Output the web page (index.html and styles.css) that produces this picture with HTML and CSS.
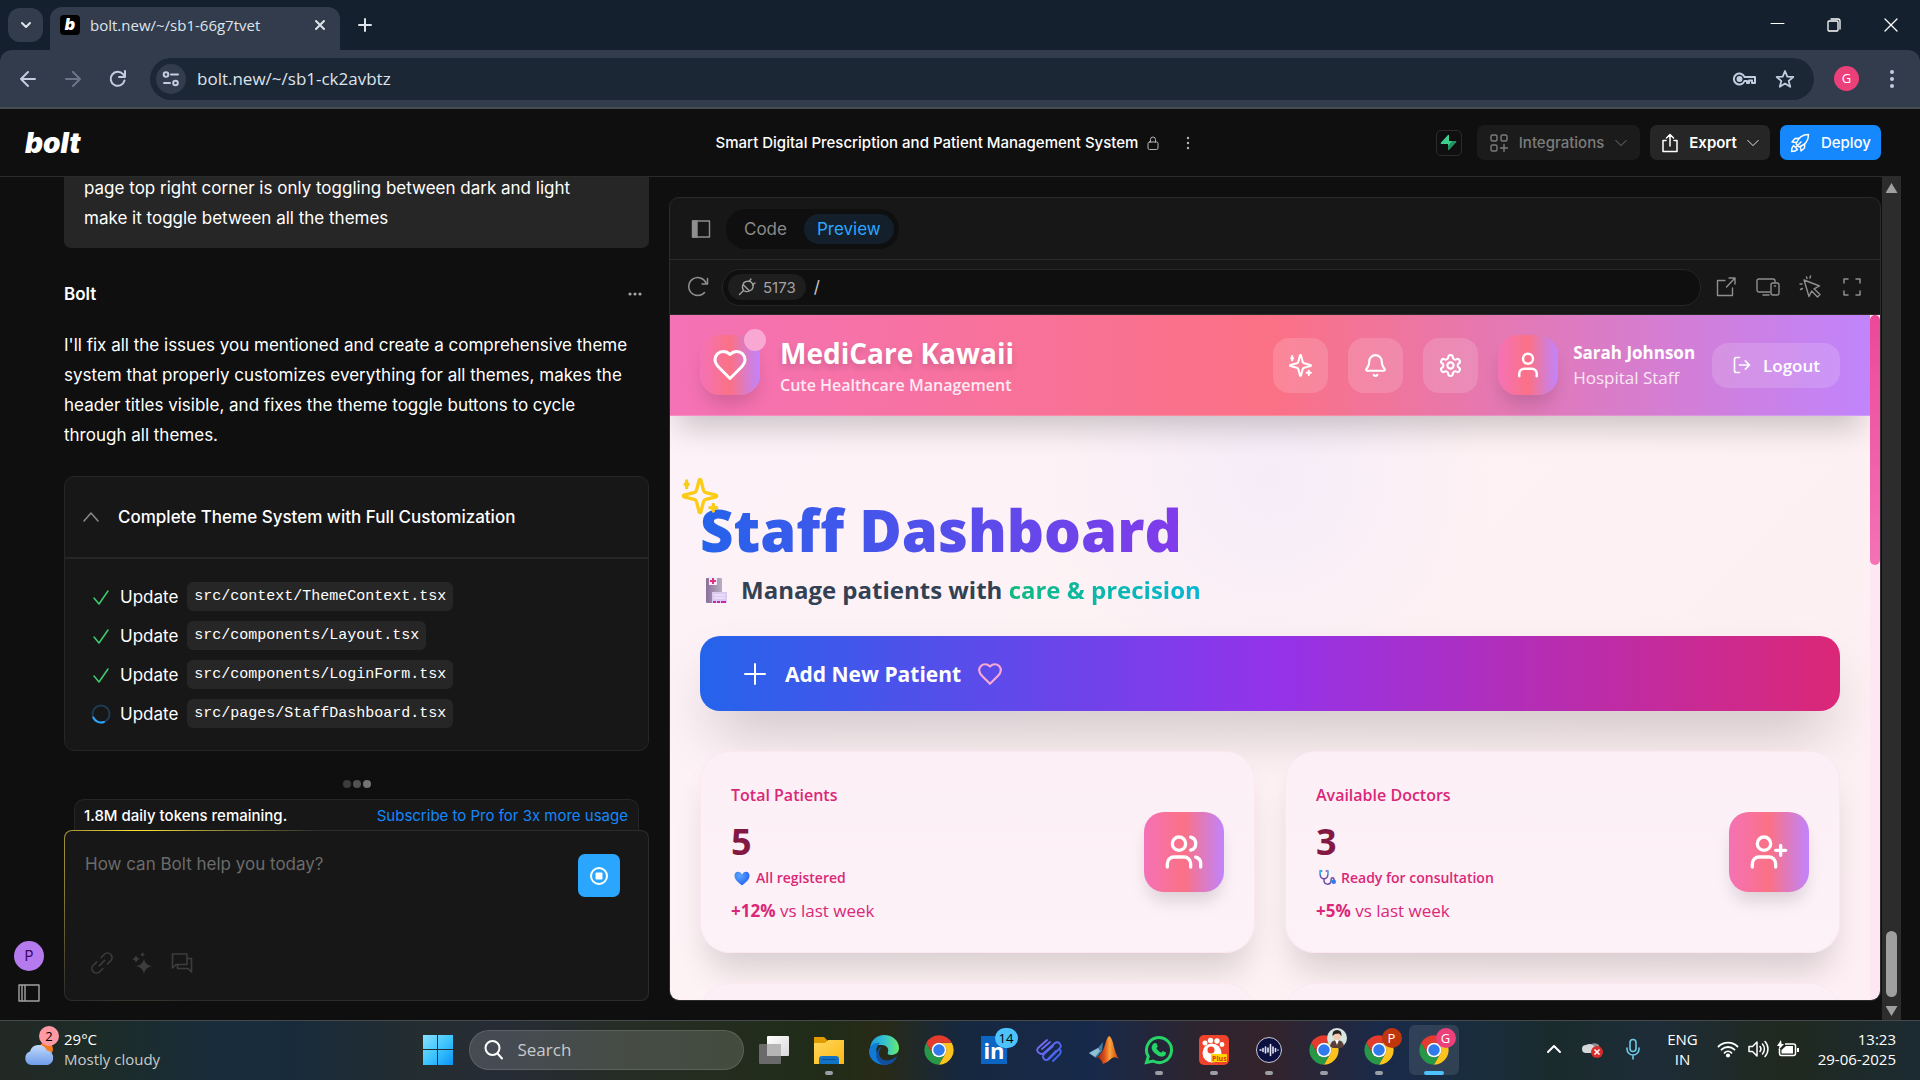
FILE: index.html
```html
<!DOCTYPE html>
<html lang="en">
<head>
  <meta charset="UTF-8" />
  <meta name="viewport" content="width=device-width, initial-scale=1.0"/>
  <title>bolt.new</title>
  <link rel="stylesheet" href="styles.css">
</head>
<body>
  <!-- shared icons -->
  <svg class="defs" width="0" height="0" aria-hidden="true">
    <defs>
      <linearGradient id="gWin" x1="0" y1="0" x2="1" y2="1"><stop offset="0" stop-color="#8ae0ff"/><stop offset=".5" stop-color="#3fc6fd"/><stop offset="1" stop-color="#0a93f5"/></linearGradient>
      <linearGradient id="gFolder" x1="0" y1="0" x2="1" y2="1"><stop offset="0" stop-color="#ffd75e"/><stop offset="1" stop-color="#fdb813"/></linearGradient>
      <linearGradient id="gEdge" x1="0" y1="0" x2="1" y2="0"><stop offset="0" stop-color="#1b9de2"/><stop offset=".5" stop-color="#35c1cf"/><stop offset="1" stop-color="#66eb6e"/></linearGradient>
      <linearGradient id="gCloud" x1="0" y1="0" x2="0" y2="1"><stop offset="0" stop-color="#c3dafb"/><stop offset="1" stop-color="#6f9cea"/></linearGradient>
      <linearGradient id="gKnot" x1="0" y1="0" x2="1" y2="1"><stop offset="0" stop-color="#8a6cf7"/><stop offset="1" stop-color="#2f63f0"/></linearGradient>
      <linearGradient id="gMat" x1="0" y1="0" x2="1" y2="0"><stop offset="0" stop-color="#7c1d14"/><stop offset=".4" stop-color="#e5561c"/><stop offset=".6" stop-color="#f9a63a"/><stop offset="1" stop-color="#c7350f"/></linearGradient>
      <linearGradient id="gTask" x1="0" y1="0" x2="1" y2="1"><stop offset="0" stop-color="#ffffff"/><stop offset="1" stop-color="#d9d9d9"/></linearGradient>
      <linearGradient id="gHosp" x1="0" y1="0" x2="1" y2="0"><stop offset="0" stop-color="#8b6f9c"/><stop offset="1" stop-color="#b9aec2"/></linearGradient>
      <radialGradient id="gHeart" cx=".35" cy=".3" r=".8"><stop offset="0" stop-color="#5aa6ff"/><stop offset="1" stop-color="#1f5cf2"/></radialGradient>
      <symbol id="chrome" viewBox="0 0 48 48">
        <path fill="#279847" d="M4.95 13A22 22 0 0 0 24 46L33.5 29.5A11 11 0 0 1 14.5 29.5Z"/>
        <path fill="#fcc31e" d="M24 46A22 22 0 0 0 43.05 13H24A11 11 0 0 1 33.5 29.5Z"/>
        <path fill="#e33b2e" d="M43.05 13A22 22 0 0 0 4.95 13L14.5 29.5A11 11 0 0 1 24 13Z"/>
        <circle cx="24" cy="24" r="11" fill="#fff"/><circle cx="24" cy="24" r="8.6" fill="#2f7bee"/>
      </symbol>
      <symbol id="heart" viewBox="0 0 24 24"><path d="M19 14c1.49-1.46 3-3.21 3-5.5A5.5 5.5 0 0 0 16.5 3c-1.76 0-3 .5-4.5 2-1.5-1.5-2.74-2-4.5-2A5.5 5.5 0 0 0 2 8.500c0 2.300 1.500 4.050 3 5.500l7 7Z"/></symbol>
      <symbol id="sparkles" viewBox="0 0 24 24"><path d="M9.937 15.500A2 2 0 0 0 8.500 14.063l-6.135-1.582a.5.5 0 0 1 0-.962L8.500 9.936A2 2 0 0 0 9.937 8.500l1.582-6.135a.5.5 0 0 1 .963 0L14.063 8.500A2 2 0 0 0 15.500 9.937l6.135 1.581a.5.5 0 0 1 0 .964L15.500 14.063a2 2 0 0 0-1.437 1.437l-1.582 6.135a.5.5 0 0 1-.963 0z"/><path d="M20 17v4M22 19h-4M4 3v4M5 5H3"/></symbol>
      <symbol id="user" viewBox="0 0 24 24"><path d="M19 21v-2a4 4 0 0 0-4-4H9a4 4 0 0 0-4 4v2"/><circle cx="12" cy="7" r="4"/></symbol>
      <symbol id="check" viewBox="0 0 20 18"><path d="M3 10l5 6 9-13"/></symbol>
      <symbol id="down" viewBox="0 0 16 16"><path d="M2 5l6 6 6-6"/></symbol>
    </defs>
  </svg>

  <header class="browser">
    <div class="tabs">
      <button class="tab-search" aria-label="Search tabs"><svg class="line" width="18" height="18" viewBox="0 0 18 18" stroke-width="2"><path d="M5 7l4 4 4-4"/></svg></button>
      <div class="tab">
        <span class="favicon">b</span>
        <span class="tab-title">bolt.new/~/sb1-66g7tvet</span>
        <button aria-label="Close tab"><svg class="line" width="14" height="14" viewBox="0 0 14 14" stroke-width="2"><path d="M3 3l8 8M11 3l-8 8"/></svg></button>
      </div>
      <button class="new-tab" aria-label="New tab"><svg class="line" width="16" height="16" viewBox="0 0 16 16" stroke-width="2"><path d="M8 2v12M2 8h12"/></svg></button>
      <div class="window-buttons">
        <button aria-label="Minimize"><svg class="line" width="16" height="16" viewBox="0 0 16 16"><path d="M2 6.500h13"/></svg></button>
        <button aria-label="Restore"><svg class="line" width="16" height="16" viewBox="0 0 16 16" stroke-width="1.300"><path d="M5 2h7a2 2 0 0 1 2 2v8"/><rect x="2" y="4" width="10" height="10" rx="1"/></svg></button>
        <button aria-label="Close"><svg class="line" width="16" height="16" viewBox="0 0 16 16" stroke-width="1.300"><path d="M2 2l12 12M14 2L2 14"/></svg></button>
      </div>
    </div>
    <div class="toolbar">
      <button aria-label="Back"><svg class="line" width="20" height="20" viewBox="0 0 20 20" stroke-width="2"><path d="M17 10H3M10 3l-7 7 7 7"/></svg></button>
      <button class="off" aria-label="Forward"><svg class="line" width="20" height="20" viewBox="0 0 20 20" stroke-width="2"><path d="M3 10h14M10 3l7 7-7 7"/></svg></button>
      <button aria-label="Reload"><svg class="line" width="20" height="20" viewBox="0 0 20 20" stroke-width="2"><path d="M16.500 11.500A7 7 0 1 1 15 5.200L17 7.500M17 2v6h-6"/></svg></button>
      <div class="address">
        <button class="site-info" aria-label="Site information"><svg class="line" width="18" height="18" viewBox="0 0 18 18" stroke-width="2"><circle cx="4" cy="4.500" r="2.300"/><path d="M9 4.500h7M2 13h6"/><circle cx="13.500" cy="13" r="2.300"/></svg></button>
        <input type="text" aria-label="Address" value="bolt.new/~/sb1-ck2avbtz">
        <button aria-label="Passwords"><svg class="line" width="24" height="20" viewBox="0 0 24 20" stroke-width="2"><path d="M12.500 8H23v6h-3v-2.500h-3V14h-2v-2h-2.500a5.500 5.500 0 1 1 0-4z"/><circle cx="7.500" cy="10" r="2" fill="currentColor"/></svg></button>
        <button aria-label="Bookmark"><svg class="line" width="20" height="20" viewBox="0 0 20 20" stroke-width="1.800"><path d="M10 2l2.300 5.600 6 .4-4.600 3.900 1.500 5.900L10 14.600l-5.200 3.200 1.500-5.900L1.700 8l6-.4z"/></svg></button>
      </div>
      <span class="profile">G</span>
      <button class="menu" aria-label="Menu"><svg width="6" height="20" viewBox="0 0 6 20" fill="currentColor"><circle cx="3" cy="3" r="2"/><circle cx="3" cy="10" r="2"/><circle cx="3" cy="17" r="2"/></svg></button>
    </div>
  </header>

  <div class="app">
    <header class="app-header">
      <a class="logo" href="#">bolt</a>
      <div class="project">
        <span>Smart Digital Prescription and Patient Management System</span>
        <svg class="line" width="14" height="16" viewBox="0 0 14 16"><rect x="2" y="7" width="10" height="7.500" rx="1.500"/><path d="M4.500 7V4.500a2.500 2.500 0 0 1 5 0V7"/></svg>
        <button aria-label="Project menu"><svg width="4" height="16" viewBox="0 0 4 16" fill="currentColor"><circle cx="2" cy="3" r="1.200"/><circle cx="2" cy="8" r="1.200"/><circle cx="2" cy="13" r="1.200"/></svg></button>
      </div>
      <div class="actions">
        <button class="supabase" aria-label="Supabase"><svg width="17" height="17" viewBox="0 0 17 17"><path fill="#3ecf8e" d="M9 1v9H1.200Q.3 9.600.8 8.800L8 1Q8.500.4 9 1z"/><path fill="#249361" d="M8 7h7.800q1 .3.400 1.200L9 16q-.6.600-1-.2z"/><path fill="#3ecf8e" d="M8 7h4L8 12z"/></svg></button>
        <button class="btn integrations"><svg class="line" width="20" height="20" viewBox="0 0 20 20" stroke-width="1.400"><rect x="2" y="2" width="6" height="6" rx="1.500"/><rect x="12" y="2" width="6" height="6" rx="1.500"/><rect x="2" y="12" width="6" height="6" rx="1.500"/><path d="M15 11.500v7M11.500 15h7"/></svg>Integrations<svg class="line" width="14" height="14"><use href="#down"/></svg></button>
        <button class="btn export"><svg class="line" width="20" height="20" viewBox="0 0 20 20" stroke-width="1.500"><path d="M6 7.500H3v11h14v-11h-3M10 13V1.500M6.500 5L10 1.500 13.500 5"/></svg>Export<svg class="line" width="14" height="14"><use href="#down"/></svg></button>
        <button class="btn deploy"><svg class="line" width="20" height="20" viewBox="0 0 20 20" stroke-width="1.400"><path d="M6 11C8 5 12 1.500 18.500 1.500 18.500 8 15 12 9 14zM6.500 9.500L2 9l3-3.500 4-.3M10.500 13.500l.5 4.500 3.500-3 .3-4M3.500 12.500c-1.500 1.500-2 4-2 6 2 0 4.500-.5 6-2zM6 14l5-5"/></svg>Deploy</button>
      </div>
    </header>

    <main class="workspace">
      <aside class="rail">
        <span class="account">P</span>
        <button aria-label="Toggle sidebar"><svg class="line" width="22" height="18" viewBox="0 0 22 18" stroke-width="1.400"><path d="M1 1h20v16H1zM7 1v16M4 1v16"/></svg></button>
      </aside>

      <section class="chat">
        <div class="conversation">
          <p class="bubble">page top right corner is only toggling between dark and light<br>make it toggle between all the themes</p>
          <div class="author"><strong>Bolt</strong><button aria-label="More"><svg width="16" height="4" viewBox="0 0 16 4" fill="currentColor"><circle cx="3" cy="2" r="1.600"/><circle cx="8" cy="2" r="1.600"/><circle cx="13" cy="2" r="1.600"/></svg></button></div>
          <p class="answer">I'll fix all the issues you mentioned and create a comprehensive theme<br>system that properly customizes everything for all themes, makes the<br>header titles visible, and fixes the theme toggle buttons to cycle<br>through all themes.</p>
          <div class="artifact">
            <button class="artifact-title"><svg class="line" width="18" height="18" viewBox="0 0 18 18" stroke-width="1.500"><path d="M2 13l7-8 7 8"/></svg>Complete Theme System with Full Customization</button>
            <ul>
              <li><svg class="line done" width="20" height="18"><use href="#check"/></svg>Update <code>src/context/ThemeContext.tsx</code></li>
              <li><svg class="line done" width="20" height="18"><use href="#check"/></svg>Update <code>src/components/Layout.tsx</code></li>
              <li><svg class="line done" width="20" height="18"><use href="#check"/></svg>Update <code>src/components/LoginForm.tsx</code></li>
              <li><svg class="line" width="20" height="20" viewBox="0 0 20 20" stroke-width="2"><circle cx="10" cy="10" r="8.500" stroke="#1c3c55"/><path d="M2.300 13.500A8.500 8.500 0 0 0 13 18" stroke="#2ba6ff"/></svg>Update <code>src/pages/StaffDashboard.tsx</code></li>
            </ul>
          </div>
          <div class="typing"><i></i><i></i><i></i></div>
        </div>
        <div class="tokens"><span>1.8M daily tokens remaining.</span><a href="#">Subscribe to Pro for 3x more usage</a></div>
        <form class="prompt">
          <div class="prompt-row">
            <textarea aria-label="Message" placeholder="How can Bolt help you today?"></textarea>
            <button type="button" class="stop" aria-label="Stop"><svg width="20" height="20" viewBox="0 0 20 20"><circle cx="10" cy="10" r="8" fill="none" stroke="#fff" stroke-width="2"/><rect x="6.500" y="6.500" width="7" height="7" rx="1" fill="#fff"/></svg></button>
          </div>
          <div class="prompt-tools">
            <button type="button" aria-label="Attach"><svg class="line" width="22" height="22" viewBox="0 0 24 24" stroke-width="1.700"><path d="M9 15l6-6M11 6l3.500-3.500a4.900 4.900 0 0 1 7 7L18 13M13 18l-3.500 3.500a4.900 4.900 0 0 1-7-7L6 11"/></svg></button>
            <button type="button" aria-label="Enhance prompt"><svg width="22" height="22" viewBox="0 0 22 22" fill="currentColor"><path d="M13 7q1.300 6 8 7-6.700 1-8 8-1.300-7-8-8 6.700-1 8-7zM5 3q.8 3.400 4 4-3.200.6-4 4-.8-3.400-4-4 3.200-.6 4-4zM11.500 0q.4 2 2.500 2.500-2.100.500-2.500 2.500-.4-2-2.500-2.500Q11.100 2 11.500 0z"/></svg></button>
            <button type="button" aria-label="Discuss"><svg class="line" width="22" height="22" viewBox="0 0 22 22" stroke-width="1.600"><path d="M1.500 2H16v10.500H5L1.500 16zM16 6.500h4.500V20L17 16.500H6.500v-4"/></svg></button>
          </div>
        </form>
      </section>

      <section class="workbench">
        <div class="bench-bar">
          <button class="ic" aria-label="Toggle files"><svg class="line" width="20" height="20" viewBox="0 0 20 20" stroke-width="1.400"><path d="M1.500 2h17v16h-17z"/><path fill="currentColor" d="M2 2h4v16H2z"/></svg></button>
          <div class="switch"><button>Code</button><button class="on">Preview</button></div>
        </div>
        <div class="url-bar">
          <button class="ic" aria-label="Reload preview"><svg class="line" width="22" height="22" viewBox="0 0 22 22" stroke-width="1.500"><path d="M17.500 16.500A9 9 0 1 1 19 7M20.500 2.500V8H15"/></svg></button>
          <div class="path">
            <button class="port"><svg class="line" width="18" height="18" viewBox="0 0 18 18" stroke-width="1.300"><path d="M1.500 16.500l4-4M5 6.500l6.500 6.500q3-1 3.500-3.500l.3-3L12 3 8.500 3.300Q5.500 4 5 6.500zM5 6.500q-1.500 3 .5 6 3 2 6 .5M11 3.500L13 1M14.500 7L17 5"/></svg>5173</button>
            <input type="text" aria-label="Preview path" value="/">
          </div>
          <button class="ic" aria-label="Open in new tab"><svg class="line" width="22" height="22" viewBox="0 0 22 22" stroke-width="1.400"><path d="M10 4.500H2.500v15h15V12M14 2h6v6M20 2l-8.500 9"/></svg></button>
          <button class="ic" aria-label="Device size"><svg class="line" width="24" height="22" viewBox="0 0 24 22" stroke-width="1.400"><path d="M14 16H3a2 2 0 0 1-2-2V5a2 2 0 0 1 2-2h14a2 2 0 0 1 2 2v1M7 19h6"/><rect x="15" y="7" width="8" height="12" rx="2"/><path d="M18.500 10h1"/></svg></button>
          <button class="ic" aria-label="Inspect"><svg class="line" width="24" height="24" viewBox="0 0 24 24" stroke-width="1.400"><path d="M6 5l15.500 6-5.500 2.800 6 5.700-2.500 2.500-5.800-6L11 21.500zM8.500 2l.5 1.500M12.500 1l-.5 2M2 9h2M2.500 14.500l2-1"/></svg></button>
          <button class="ic" aria-label="Fullscreen"><svg class="line" width="20" height="20" viewBox="0 0 20 20" stroke-width="1.500"><path d="M2 6V2h4M14 2h4v4M18 14v4h-4M6 18H2v-4"/></svg></button>
        </div>

        <div class="preview">
          <div class="page">
            <header class="clinic-header">
              <div class="tile brand-tile"><svg class="line" width="36" height="36"><use href="#heart"/></svg><i class="dot"></i></div>
              <div class="brand"><h1>MediCare Kawaii</h1><p>Cute Healthcare Management</p></div>
              <button class="round" aria-label="Change theme"><svg class="line" width="25" height="25"><use href="#sparkles"/></svg></button>
              <button class="round" aria-label="Notifications"><svg class="line" width="25" height="25" viewBox="0 0 24 24"><path d="M10.300 21a1.940 1.940 0 0 0 3.400 0M3.260 15.330A1 1 0 0 0 4 17h16a1 1 0 0 0 .74-1.670C19.410 13.960 18 12.500 18 8A6 6 0 0 0 6 8c0 4.500-1.410 5.960-2.740 7.330"/></svg></button>
              <button class="round" aria-label="Settings"><svg class="line" width="25" height="25" viewBox="0 0 24 24"><path d="M12.220 2h-.44a2 2 0 0 0-2 2v.18a2 2 0 0 1-1 1.730l-.43.25a2 2 0 0 1-2 0l-.15-.08a2 2 0 0 0-2.730.73l-.22.38a2 2 0 0 0 .73 2.730l.15.1a2 2 0 0 1 1 1.720v.51a2 2 0 0 1-1 1.740l-.15.09a2 2 0 0 0-.73 2.730l.22.38a2 2 0 0 0 2.730.73l.15-.08a2 2 0 0 1 2 0l.43.25a2 2 0 0 1 1 1.730V20a2 2 0 0 0 2 2h.44a2 2 0 0 0 2-2v-.18a2 2 0 0 1 1-1.730l.43-.25a2 2 0 0 1 2 0l.15.08a2 2 0 0 0 2.730-.73l.22-.39a2 2 0 0 0-.73-2.730l-.15-.08a2 2 0 0 1-1-1.740v-.5a2 2 0 0 1 1-1.740l.15-.09a2 2 0 0 0 .73-2.730l-.22-.38a2 2 0 0 0-2.730-.73l-.15.08a2 2 0 0 1-2 0l-.43-.25a2 2 0 0 1-1-1.730V4a2 2 0 0 0-2-2z"/><circle cx="12" cy="12" r="3"/></svg></button>
              <div class="tile"><svg class="line" width="30" height="30"><use href="#user"/></svg></div>
              <div class="who"><strong>Sarah Johnson</strong><span>Hospital Staff</span></div>
              <button class="logout"><svg class="line" width="20" height="20" viewBox="0 0 24 24"><path d="M9 21H5a2 2 0 0 1-2-2V5a2 2 0 0 1 2-2h4M16 17l5-5-5-5M21 12H9"/></svg>Logout</button>
            </header>

            <div class="dashboard">
              <div class="headline">
                <h2>Staff Dashboard</h2>
                <svg class="line twinkle" width="40" height="40"><use href="#sparkles"/></svg>
              </div>
              <p class="lead">
                <svg width="30" height="30" viewBox="0 0 30 30"><rect x="6" y="3" width="16" height="25" rx="1" fill="url(#gHosp)"/><rect x="9" y="2" width="8" height="8" fill="#f6e9fb"/><path d="M12 3h2v2h2v2h-2v2h-2V7h-2V5h2z" fill="#e0337c"/><rect x="12" y="17" width="15" height="11" fill="#dcc9f2"/><path d="M14 20h11M14 23h11" stroke="#f7f0ff"/><path d="M13 27h3M17 27h3M21 27h5" stroke="#c12aa0" stroke-width="2"/></svg>
                <span>Manage patients with <em>care &amp; precision</em></span>
              </p>
              <button class="add"><svg class="line" width="26" height="26" viewBox="0 0 26 26"><path d="M13 3v20M3 13h20"/></svg><span>Add New Patient</span><svg class="line pink" width="26" height="26"><use href="#heart"/></svg></button>

              <div class="cards">
                <article class="card">
                  <div>
                    <h3>Total Patients</h3>
                    <b class="count">5</b>
                    <p class="note"><svg width="18" height="18" viewBox="0 0 24 24"><path fill="url(#gHeart)" d="M12 22C7 18 2 14 2 9c0-3.500 2-5.500 4.500-5.500S11 5 12 7.500c1-2.500 3-4 5.500-4S22 5.500 22 9c0 5-5 9-10 13z"/></svg>All registered</p>
                    <p class="trend"><b>+12%</b> vs last week</p>
                  </div>
                  <div class="tile big"><svg class="line" width="40" height="40" viewBox="0 0 24 24"><path d="M16 21v-2a4 4 0 0 0-4-4H6a4 4 0 0 0-4 4v2M22 21v-2a4 4 0 0 0-3-3.870M16 3.130a4 4 0 0 1 0 7.750"/><circle cx="9" cy="7" r="4"/></svg></div>
                </article>
                <article class="card">
                  <div>
                    <h3>Available Doctors</h3>
                    <b class="count">3</b>
                    <p class="note"><svg class="line" width="18" height="18" viewBox="0 0 24 24"><path stroke="#6a4aa8" d="M5 2.500H3V8a5 5 0 0 0 10 0V2.500h-2M8 13v3.500a5 5 0 0 0 9 1.500c1-2-.5-5 1.500-6 2-.8 3 1 3 3"/><path d="M3 2v5M13 2v5" stroke="#38b6f2"/><circle cx="21" cy="17" r="2" fill="#2b7cf5" stroke="#2b7cf5"/></svg>Ready for consultation</p>
                    <p class="trend"><b>+5%</b> vs last week</p>
                  </div>
                  <div class="tile big"><svg class="line" width="40" height="40" viewBox="0 0 24 24"><path d="M16 21v-2a4 4 0 0 0-4-4H6a4 4 0 0 0-4 4v2M19 8v6M22 11h-6"/><circle cx="9" cy="7" r="4"/></svg></div>
                </article>
                <article class="card"></article>
                <article class="card"></article>
              </div>
            </div>
          </div>
          <div class="page-scroll"><i></i></div>
        </div>
      </section>

      <div class="app-scroll"><i class="up"></i><i class="thumb"></i><i class="dn"></i></div>
    </main>
  </div>

  <footer class="taskbar">
    <div class="weather">
      <svg width="34" height="40" viewBox="0 0 34 40"><circle cx="23" cy="20" r="7" fill="#f57c1f"/><path fill="url(#gCloud)" d="M8 36a7 7 0 0 1-1-13.500 9 9 0 0 1 17-1A7.500 7.500 0 0 1 25 36z"/></svg>
      <span class="badge alert">2</span>
      <div><b>29°C</b><span>Mostly cloudy</span></div>
    </div>
    <nav class="dock">
      <button class="start" aria-label="Start"><svg width="30" height="30" viewBox="0 0 30 30" fill="url(#gWin)"><path d="M0 0h14v14H0zM15 0h15v14H15zM0 15h14v15H0zM15 15h15v15H15z"/></svg></button>
      <label class="search"><svg class="line" width="22" height="22" viewBox="0 0 22 22" stroke-width="2"><circle cx="8.500" cy="9" r="7"/><path d="M13.500 14.500l4.500 5"/></svg><input type="text" placeholder="Search"></label>
      <button class="app-icon" aria-label="Task view"><svg width="30" height="30" viewBox="0 0 30 30"><rect y="9" width="22" height="20" rx="1" fill="#6a6a6a"/><rect x="8" y="1" width="22" height="20" rx="1" fill="url(#gTask)"/><path fill="#b5b5b5" d="M8 9h14v12H8z"/></svg></button>
      <button class="app-icon open" aria-label="File Explorer"><svg width="30" height="30" viewBox="0 0 30 30"><path fill="#e09b00" d="M0 2h10l3 3v5H0z"/><path fill="url(#gFolder)" d="M0 8h11l3-3h16v24H0z"/><path fill="#1173c6" d="M5 29v-5q0-3 3-3h14q3 0 3 3v5z"/><path fill="#0a4f8f" d="M8 24h14v1H8z"/></svg></button>
      <button class="app-icon" aria-label="Edge"><svg width="30" height="30" viewBox="0 0 30 30"><path fill="url(#gEdge)" d="M1 13C2 5 8 0 15 0c9 0 15 6 15 13 0 5-4 7-8 7-3 0-4-1-3-3 1-3-1-7-6-7C8 10 3 10 1 13z"/><path fill="#0f7bd4" d="M0 16C1 10 6 7 11 8c-4 3-5 8-2 13 3 6 9 8 14 7-11 5-23-1-23-12z"/><path fill="#124e9e" d="M13 12c-4 3-4 9 0 12 5 3 11 1 15-3-1 5-6 9-13 9C8 28 5 20 9 15c1-2 2-3 4-3z"/></svg></button>
      <button class="app-icon" aria-label="Chrome"><svg width="32" height="32"><use href="#chrome"/></svg></button>
      <button class="app-icon" aria-label="LinkedIn"><span class="linkedin">in</span><span class="badge count14">14</span></button>
      <button class="app-icon" aria-label="Knot"><svg class="line" width="28" height="28" viewBox="0 0 28 28" stroke-width="1.800"><path stroke="url(#gKnot)" d="M12 4L3 12q-2 3 1 5t5 0L20 7M15 6l-8 7M20 7q3-2 5 1t-1 5L14 23q-3 2-5 0t0-5l9-8M24 13q3 2 1 5l-7 7M21 15l-8 8"/></svg></button>
      <button class="app-icon" aria-label="MATLAB"><svg width="30" height="30" viewBox="0 0 30 30"><path fill="#3f7fa8" d="M0 18l9-5 5-6-1 9-6 7z"/><path fill="#8fbfd6" d="M0 18l9-5 2 3-5 6z"/><path fill="url(#gMat)" d="M7 22q6-2 9-12 2-8 4-9 3 1 5 11 2 8 5 12-4-3-7-1-4 4-9 6-2-6-7-7z"/></svg></button>
      <button class="app-icon open" aria-label="WhatsApp"><svg width="30" height="30" viewBox="0 0 30 30"><path fill="none" stroke="#25d366" stroke-width="3" d="M2.500 27.500l1.800-6A12.500 12.500 0 1 1 9 26z"/><path fill="#25d366" d="M10.500 8l2 .2 1.300 3.300-1.400 1.800q1.500 3 4.800 4.500l1.600-1.800 3.200 1.500q0 4-4 4.200-4-.2-7.500-3.700T7.800 11.500Q8.500 8.500 10.500 8z"/></svg></button>
      <button class="app-icon open" aria-label="Gom"><svg width="30" height="30" viewBox="0 0 30 30"><rect width="30" height="30" rx="5" fill="#f0432b"/><circle cx="13" cy="18" r="9.500" fill="#fff"/><circle cx="12" cy="15" r="3.500" fill="#f0432b"/><g fill="#fff"><circle cx="6" cy="8" r="2.500"/><circle cx="11.500" cy="5.500" r="2.700"/><circle cx="18" cy="6" r="2.700"/><circle cx="23" cy="9.500" r="2.400"/></g><rect x="12" y="19" width="16" height="8" rx="1" fill="#ffd400"/><text class="plus" x="13" y="26">Plus</text></svg></button>
      <button class="app-icon open" aria-label="Voice"><svg class="line" width="28" height="28" viewBox="0 0 28 28" stroke-width="1.600"><circle cx="14" cy="14" r="12.500" fill="#0b1040" stroke="#c9ccd6" stroke-width="1"/><path stroke="#e3e7f5" d="M5 14h1M8 12.500v3M10.500 11v6M13 12v4M15.500 8.500v11M18 11v6M20.500 12.500v3M23 14h0"/></svg></button>
      <button class="app-icon open" aria-label="Chrome profile"><svg width="32" height="32"><use href="#chrome"/></svg><span class="badge face"><svg width="20" height="20" viewBox="0 0 20 20"><circle cx="10" cy="10" r="10" fill="#d5e6e3"/><path fill="#5a4038" d="M3 18q1-6 7-6t7 6a10 10 0 0 1-14 0z"/><path fill="#fff" d="M8 12h4l-2 5z"/><circle cx="10" cy="8" r="4" fill="#f0c9ae"/><path fill="#2b2020" d="M5.500 8Q5 2 10 2t4.500 6L12 5.500 8 6z"/></svg></span></button>
      <button class="app-icon open" aria-label="Chrome P"><svg width="32" height="32"><use href="#chrome"/></svg><span class="badge p">P</span></button>
      <button class="app-icon active" aria-label="Chrome G"><svg width="32" height="32"><use href="#chrome"/></svg><span class="badge g">G</span></button>
    </nav>
    <div class="tray">
      <button aria-label="Hidden icons"><svg class="line" width="16" height="16" viewBox="0 0 16 16" stroke-width="2"><path d="M2 11l6-6 6 6"/></svg></button>
      <svg width="22" height="20" viewBox="0 0 22 20"><path fill="#8d9094" d="M8 6a6 5 0 0 1 9 0l1 6H8z"/><path fill="#d5d8da" d="M4 14a4 4 0 0 1 0-8 6 5 0 0 1 8 1l4 7z"/><circle cx="15" cy="13" r="6" fill="#d92c2c"/><path d="M12.500 10.500l5 5M17.500 10.500l-5 5" stroke="#fff" stroke-width="1.500"/></svg>
      <svg class="line mic" width="16" height="22" viewBox="0 0 16 22" stroke-width="1.600"><rect x="5" y="1.500" width="6" height="12" rx="3"/><path d="M2 10v1a6 6 0 0 0 12 0v-1M8 17v4"/></svg>
      <button class="lang">ENG<br>IN</button>
      <div class="status">
        <svg class="line" width="22" height="18" viewBox="0 0 22 18" stroke-width="1.800"><path d="M1.500 6.500a13.500 13.500 0 0 1 19 0M4.500 9.700a9.200 9.200 0 0 1 13 0M7.500 12.800a5 5 0 0 1 7 0"/><circle cx="11" cy="15.500" r="1.200" fill="currentColor"/></svg>
        <svg class="line" width="22" height="20" viewBox="0 0 22 20" stroke-width="1.500"><path d="M2 7.500h3.500L10 3v14l-4.500-4.500H2zM13 7.500a4 4 0 0 1 0 5M15.500 5a7.500 7.500 0 0 1 0 10M18 2.500a11 11 0 0 1 0 15"/></svg>
        <svg width="22" height="18" viewBox="0 0 22 18"><path fill="none" stroke="#fff" stroke-width="1.500" d="M8 4h8.500a2 2 0 0 1 2 2v7.500a2 2 0 0 1-2 2h-12a2 2 0 0 1-2-2V9"/><path fill="#fff" d="M9 6h7v7.500H4.500V10L9 6zM20 8h2v4h-2zM4 0L0 6h2.500L1.500 10 7 4H4.500z"/></svg>
      </div>
      <div class="clock">13:23<br>29-06-2025</div>
    </div>
  </footer>
</body>
</html>
```
FILE: styles.css
```css
* {
  box-sizing: border-box;
}

body {
  margin: 0;
  height: 100vh;
  display: flex;
  flex-direction: column;
  overflow: hidden;
  background-color: #0f0f0f;
  color: #fff;
  font-family: "Inter", sans-serif;
  font-size: 17px;
}

h1, h2, h3, p, ul {
  margin: 0;
  padding: 0;
}

button, input, textarea {
  font: inherit;
  color: inherit;
  background: none;
  border: none;
  padding: 0;
  margin: 0;
}

button {
  display: flex;
  align-items: center;
  justify-content: center;
  flex-shrink: 0;
  cursor: pointer;
}

svg {
  display: block;
  flex-shrink: 0;
}

input, textarea {
  outline: none;
  min-width: 0;
}

.defs {
  position: absolute;
}

.line {
  fill: none;
  stroke: currentColor;
  stroke-linecap: round;
  stroke-linejoin: round;
}

/* Browser window */

.browser {
  background-color: #14202e;
  font-family: "Open Sans", sans-serif;
  color: #dfe3ea;
}

.tabs {
  display: flex;
  height: 50px;
  align-items: flex-end;
}

.tab-search {
  width: 35px;
  height: 34px;
  margin: 0 7px 8px 8px;
  background-color: #323c4d;
  border-radius: 12px;
}

.tab {
  display: flex;
  align-items: center;
  width: 290px;
  height: 43px;
  padding: 0 13px 7px 10px;
  background-color: #323c4d;
  border-radius: 12px 12px 0 0;
}

.favicon {
  width: 20px;
  height: 20px;
  margin-right: 10px;
  border-radius: 4px;
  background-color: #000;
  color: #fff;
  font: italic 900 16px/19px "Inter", sans-serif;
  text-align: center;
}

.tab-title {
  flex: 1;
  font-size: 15px;
}

.new-tab {
  margin: 0 0 17px 17px;
}

.window-buttons {
  display: flex;
  align-self: center;
  gap: 41px;
  margin-left: auto;
  padding-right: 21px;
  color: #fff;
}

.toolbar {
  display: flex;
  align-items: center;
  height: 59px;
  padding: 0 25px 0 18px;
  background-color: #323c4d;
  border-bottom: 2px solid #454c52;
  border-radius: 12px 12px 0 0;
  color: #c3cde0;
}

.toolbar > button {
  margin-right: 25px;
}

.toolbar > .menu {
  margin: 0;
}

.off {
  opacity: .4;
}

.address {
  flex: 1;
  display: flex;
  align-items: center;
  gap: 19px;
  height: 42px;
  margin-left: -3px;
  padding: 0 19px 0 6px;
  background-color: #1c2736;
  border-radius: 21px;
}

.address input {
  flex: 1;
  margin-left: -8px;
  font-size: 17px;
  color: #dfe3ea;
}

.site-info {
  width: 30px;
  height: 30px;
  border-radius: 50%;
  background-color: #323c4d;
}

.profile {
  width: 25px;
  height: 25px;
  margin: 0 30px 0 20px;
  border-radius: 50%;
  background-color: #ec407a;
  color: #fff;
  font-size: 13px;
  line-height: 25px;
  text-align: center;
}

/* Bolt */

.app {
  flex: 1;
  min-height: 0;
  display: flex;
  flex-direction: column;
  margin-right: 19px;
}

.app-header {
  display: grid;
  grid-template-columns: 1fr auto 1fr;
  align-items: center;
  height: 68px;
  padding: 0 20px 0 25px;
  border-bottom: 1px solid #2b2b2b;
}

.logo {
  color: #fff;
  font-size: 28px;
  font-style: italic;
  font-weight: 900;
  line-height: 34px;
  text-decoration: none;
}

.project {
  display: flex;
  align-items: center;
  gap: 8px;
  font-size: 15px;
  font-weight: 500;
}

.project svg {
  color: #b5b5b5;
}

.project button {
  margin-left: 18px;
}

.actions {
  display: flex;
  justify-content: flex-end;
  align-items: center;
  gap: 10px;
}

.supabase {
  width: 26px;
  height: 26px;
  margin-right: 5px;
  border: 1px solid #2b2b2b;
  border-radius: 5px;
}

.btn {
  height: 35px;
  gap: 10px;
  padding: 0 12px;
  border-radius: 7px;
  font-size: 15px;
  font-weight: 600;
}

.integrations {
  background-color: #1b1b1b;
  color: #7c7c7c;
  font-weight: 500;
}

.export {
  gap: 9px;
  padding: 0 10px;
  background-color: #262626;
}

.deploy {
  gap: 11px;
  padding: 0 10px;
  background-color: #1488fc;
  font-weight: 500;
}

.workspace {
  flex: 1;
  min-height: 0;
  display: flex;
}

.rail {
  width: 64px;
  display: flex;
  flex-direction: column;
  justify-content: flex-end;
  align-items: flex-start;
  gap: 13px;
  padding: 0 0 18px 14px;
  color: #a3a3a3;
}

.rail button {
  margin-left: 4px;
}

.account {
  width: 30px;
  height: 30px;
  border-radius: 50%;
  background-color: #b57bee;
  color: #3b0764;
  font-size: 14px;
  line-height: 30px;
  text-align: center;
}

.chat {
  width: 585px;
  display: flex;
  flex-direction: column;
  padding-bottom: 19px;
}

.conversation {
  flex: 1;
  min-height: 0;
  display: flex;
  flex-direction: column;
  justify-content: flex-end;
  overflow: hidden;
  padding-bottom: 11px;
  line-height: 30px;
}

.conversation > * {
  flex-shrink: 0;
}

.bubble {
  margin-bottom: 31px;
  padding: 20px 20px 15px;
  background-color: #262626;
  border-radius: 7px;
}

.author {
  display: flex;
  justify-content: space-between;
  padding-right: 6px;
  margin-bottom: 21px;
}

.author strong {
  font-weight: 600;
}

.author button {
  color: #a3a3a3;
}

.answer {
  margin-bottom: 26px;
}

.artifact {
  border: 1px solid #262626;
  border-radius: 10px;
  background-color: #171717;
}

.artifact-title {
  width: 100%;
  height: 82px;
  justify-content: flex-start;
  gap: 18px;
  padding-left: 17px;
  border-bottom: 2px solid #262626;
  font-weight: 500;
}

.artifact-title svg {
  color: #8a8a8a;
}

.artifact ul {
  display: flex;
  flex-direction: column;
  gap: 10px;
  padding: 23px 26px 22px;
  list-style: none;
}

.artifact li {
  display: flex;
  align-items: center;
  gap: 9px;
  height: 29px;
}

.done {
  color: #3ecf6e;
  stroke-width: 1.5;
}

.artifact code {
  padding: 0 7px;
  background-color: #262626;
  border-radius: 6px;
  font-family: "Liberation Mono", monospace;
  font-size: 15px;
  line-height: 29px;
}

.typing {
  display: flex;
  justify-content: center;
  gap: 2px;
  margin-top: 29px;
}

.typing i {
  width: 8px;
  height: 8px;
  border-radius: 50%;
  background-color: #3c3c3c;
}

.typing i:nth-child(2) {
  background-color: #525252;
}

.typing i:nth-child(3) {
  background-color: #737373;
}

.tokens {
  display: flex;
  justify-content: space-between;
  align-items: center;
  height: 31px;
  margin: 0 10px;
  padding: 0 10px 0 9px;
  background-color: #171717;
  border: 1px solid #262626;
  border-bottom: none;
  border-radius: 10px 10px 0 0;
  font-size: 15px;
  font-weight: 500;
}

.tokens a {
  color: #1488fc;
  font-weight: 400;
  text-decoration: none;
}

.prompt {
  display: flex;
  flex-direction: column;
  justify-content: space-between;
  height: 171px;
  padding: 23px 28px 26px 20px;
  border: 1px solid transparent;
  border-radius: 8px;
  background: linear-gradient(#171717, #171717) padding-box, radial-gradient(circle at 75px 0, #f5e030 10px, #a8983a 65px, #2b2b2b 180px) border-box;
}

.prompt-row {
  display: flex;
}

.prompt textarea {
  flex: 1;
  height: 44px;
  resize: none;
}

.prompt textarea::placeholder {
  color: #6b6b6b;
}

.stop {
  width: 42px;
  height: 43px;
  background-color: #2ba6ff;
  border-radius: 7px;
}

.prompt-tools {
  display: flex;
  gap: 18px;
  padding-left: 6px;
  color: #3d3d3d;
}

/* Workbench */

.workbench {
  flex: 1;
  min-width: 0;
  display: flex;
  flex-direction: column;
  margin: 20px 1px 19px 20px;
  border: 1px solid #2b2b2b;
  border-radius: 10px;
  overflow: hidden;
  background-color: #171717;
}

.ic {
  width: 42px;
  color: #8f8f8f;
}

.bench-bar {
  display: flex;
  align-items: center;
  height: 62px;
  padding-left: 10px;
  gap: 4px;
  border-bottom: 1px solid #2b2b2b;
}

.switch {
  display: flex;
  padding: 5px;
  background-color: #0f0f0f;
  border-radius: 20px;
  color: #8a8a8a;
}

.switch button {
  height: 30px;
  padding: 0 13px;
  border-radius: 15px;
}

.switch .on {
  margin-left: 4px;
  background-color: #13202b;
  color: #2ba6ff;
}

.url-bar {
  display: flex;
  align-items: center;
  height: 55px;
  padding: 0 7px 0 7px;
  border-bottom: 1px solid #2b2b2b;
}

.path {
  flex: 1;
  display: flex;
  align-items: center;
  gap: 8px;
  height: 37px;
  margin: 0 4px 0 3px;
  padding-left: 5px;
  background-color: #0f0f0f;
  border: 1px solid #262626;
  border-radius: 18px;
}

.path input {
  flex: 1;
  color: #c9c9c9;
}

.port {
  height: 26px;
  gap: 7px;
  padding: 0 10px;
  border-radius: 13px;
  background-color: #1e1e1e;
  color: #a3a3a3;
  font-size: 15px;
}

/* Clinic page */

.preview {
  flex: 1;
  min-height: 0;
  display: flex;
  font-family: "Open Sans", sans-serif;
}

.page {
  flex: 1;
  min-width: 0;
  overflow: hidden;
  background: radial-gradient(circle at 50% 24%, #f6ecf8 0, transparent 28%), linear-gradient(135deg, #fdf2f8, #fef2f4 50%, #fdeff3);
}

.page .line {
  stroke-width: 2;
}

.clinic-header {
  display: flex;
  align-items: center;
  height: 101px;
  padding: 0 30px;
  background: linear-gradient(90deg, #f472b6, #fb7185, #c084fc);
  border-bottom: 1px solid rgba(255, 255, 255, .2);
  box-shadow: 0 20px 30px -8px rgba(0, 0, 0, .2);
}

.tile {
  display: flex;
  align-items: center;
  justify-content: center;
  flex-shrink: 0;
  width: 60px;
  height: 60px;
  border-radius: 20px;
  background: linear-gradient(90deg, #f472b6, #fb7185 50%, #c084fc);
  box-shadow: 0 12px 18px -4px rgba(0, 0, 0, .15);
  color: #fff;
}

.brand-tile {
  position: relative;
}

.dot {
  position: absolute;
  top: -6px;
  right: -6px;
  width: 22px;
  height: 22px;
  border-radius: 50%;
  background-color: #f9a8d4;
}

.brand {
  margin: 0 auto 0 20px;
  padding-top: 3px;
}

.brand h1 {
  font-size: 28px;
  font-weight: 700;
  line-height: 37px;
  text-shadow: 0 4px 6px rgba(0, 0, 0, .15);
}

.brand p {
  font-size: 16px;
  font-weight: 600;
  line-height: 26px;
  color: #ffe9f3;
}

.round {
  width: 55px;
  height: 55px;
  margin-right: 20px;
  border-radius: 16px;
  background-color: rgba(255, 255, 255, .15);
}

.who {
  display: flex;
  flex-direction: column;
  margin: 0 17px 0 15px;
  font-size: 17px;
  line-height: 25px;
}

.who span {
  color: #fce7f3;
}

.logout {
  height: 45px;
  gap: 11px;
  padding: 0 20px;
  border-radius: 16px;
  background-color: rgba(255, 255, 255, .15);
  font-size: 17px;
  font-weight: 600;
}

.dashboard {
  padding: 76px 30px 0;
}

.headline {
  position: relative;
}

.headline h2 {
  width: 100%;
  font-size: 58px;
  font-weight: 800;
  line-height: 75px;
  background: linear-gradient(90deg, #2563eb, #9333ea 570px);
  -webkit-background-clip: text;
  background-clip: text;
  color: transparent;
}

.twinkle {
  position: absolute;
  top: -16px;
  left: -20px;
  color: #facc15;
}

.lead {
  display: flex;
  align-items: center;
  gap: 11px;
  height: 45px;
  margin-bottom: 24px;
  font-size: 24px;
  font-weight: 700;
  color: #334155;
}

.lead em {
  font-style: normal;
  background: linear-gradient(90deg, #10b981, #06b6d4);
  -webkit-background-clip: text;
  background-clip: text;
  color: transparent;
}

.add {
  width: 100%;
  height: 75px;
  justify-content: flex-start;
  gap: 16px;
  padding-left: 42px;
  border-radius: 20px;
  background: linear-gradient(90deg, #2563eb, #9333ea, #db2777);
  box-shadow: 0 30px 60px -15px rgba(0, 0, 0, .25);
  font-size: 21px;
  font-weight: 700;
}

.add span {
  margin-left: 1px;
}

.pink {
  color: #f9a8d4;
}

.cards {
  display: grid;
  grid-template-columns: 1fr 1fr;
  gap: 30px;
  margin-top: 40px;
}

.card {
  display: flex;
  justify-content: space-between;
  align-items: center;
  min-height: 202px;
  padding: 29px 30px;
  border: 1px solid #fce7f3;
  border-radius: 30px;
  background: linear-gradient(#fcf0f6, #fdf2f8);
  box-shadow: 0 25px 32px -8px rgba(0, 0, 0, .15);
  color: #db2777;
}

.card h3 {
  font-size: 16px;
  font-weight: 600;
  line-height: 27px;
}

.count {
  display: block;
  margin: 10px 0 4px;
  font-size: 36px;
  line-height: 45px;
  color: #831843;
}

.note {
  display: flex;
  align-items: center;
  gap: 5px;
  padding-left: 2px;
  font-size: 14px;
  font-weight: 600;
  line-height: 20px;
}

.trend {
  margin-top: 10px;
  font-size: 17px;
  line-height: 25px;
}

.big {
  width: 80px;
  height: 80px;
}

.page-scroll {
  width: 10px;
  background-color: #fce7f3;
}

.page-scroll i {
  display: block;
  height: 250px;
  border-radius: 5px;
  background: linear-gradient(#ec4899, #f472b6);
}

.app-scroll {
  width: 19px;
  display: flex;
  flex-direction: column;
  align-items: center;
  padding: 6px 0 4px;
  background-color: #2c2c2c;
}

.up, .dn {
  width: 12px;
  height: 10px;
  background-color: #9f9f9f;
  clip-path: polygon(50% 0, 100% 100%, 0 100%);
}

.dn {
  margin-top: 9px;
  clip-path: polygon(0 0, 100% 0, 50% 100%);
}

.thumb {
  width: 11px;
  height: 66px;
  margin-top: auto;
  border-radius: 6px;
  background-color: #9f9f9f;
}

/* Windows taskbar */

.taskbar {
  display: flex;
  align-items: center;
  height: 60px;
  padding-bottom: 2px;
  border-top: 1px solid #454a4c;
  background: linear-gradient(90deg, #222824 0, #1d2c28 5%, #182c3c 12%, #182b3b 15%, #242d30 22%, #262c36 26%, #262d24 33%, #202c18 43%, #282a17 46%, #16283f 50%, #17294a 57%, #2c2430 62%, #33232b 66%, #192a4a 72%, #192d3d 77%, #1a2b2c 81%, #1d2c38 86%, #20291f 93%, #1c2b33 100%);
  font-family: "Open Sans", sans-serif;
  font-size: 15px;
}

.weather, .tray {
  flex: 1;
  display: flex;
  align-items: center;
  padding-bottom: 2px;
}

.weather {
  position: relative;
  gap: 7px;
  padding-left: 23px;
  line-height: 20px;
}

.weather b, .weather span {
  display: block;
  font-weight: 400;
}

.weather div span {
  color: #c7cbce;
}

.dock {
  display: flex;
  align-items: center;
  height: 58px;
  margin-right: 50px;
}

.start {
  width: 55px;
}

.search {
  display: flex;
  align-items: center;
  gap: 12px;
  width: 275px;
  height: 40px;
  margin: 0 3px 0 3px;
  padding-left: 14px;
  border: 1px solid rgba(255, 255, 255, .12);
  border-radius: 20px;
  background-color: rgba(255, 255, 255, .15);
  font-size: 17px;
}

.search input {
  flex: 1;
}

.search input::placeholder {
  color: #c7cbce;
}

.app-icon {
  position: relative;
  width: 55px;
  height: 50px;
}

.open::after, .active::after {
  content: "";
  position: absolute;
  bottom: 0;
  width: 8px;
  height: 4px;
  border-radius: 2px;
  background-color: #9a9fa3;
}

.active {
  width: 50px;
  margin-left: 2px;
  border-radius: 6px;
  background-color: rgba(255, 255, 255, .1);
}

.active::after {
  width: 20px;
  background-color: #4cc2ff;
}

.badge {
  position: absolute;
  top: 3px;
  right: 5px;
  min-width: 20px;
  height: 20px;
  border-radius: 10px;
  font-size: 13px;
  line-height: 20px;
  text-align: center;
}

.weather .alert {
  top: -3px;
  left: 39px;
  right: auto;
  background-color: #ff99a4;
  color: #000;
}

.count14 {
  right: 4px;
  min-width: 23px;
  background-color: #4cc2ff;
  color: #000;
}

.p {
  background-color: #bf360c;
}

.g {
  right: 3px;
  background-color: #ec407a;
}

.linkedin {
  width: 26px;
  height: 28px;
  background-color: #0a66c2;
  font-size: 22px;
  font-weight: 700;
  line-height: 28px;
}

.plus {
  fill: #e0321c;
  font-size: 7px;
  font-weight: 700;
}

.tray {
  justify-content: flex-end;
  padding-right: 24px;
  line-height: 20px;
}

.mic {
  margin: 0 26px 0 21px;
  color: #6fc8e8;
}

.tray > button:first-child {
  margin-right: 20px;
}

.lang {
  text-align: center;
}

.status {
  display: flex;
  align-items: center;
  gap: 8px;
  margin: 0 19px;
}

.clock {
  text-align: right;
}
```
